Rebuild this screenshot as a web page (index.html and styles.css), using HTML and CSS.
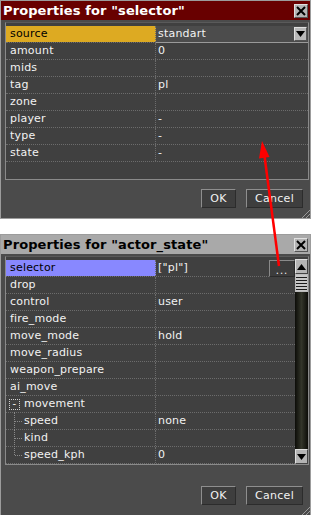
FILE: index.html
```html
<!DOCTYPE html>
<html lang="en">

<head>
    <meta charset="UTF-8">
    <title>Properties</title>
    <link rel="stylesheet" href="styles.css">
</head>

<body>

    <div class="win win-red">
        <div class="titlebar">
            <span class="title">Properties for "selector"</span>
            <span class="close"><svg width="10" height="10" viewBox="0 0 10 10"><path d="M1 1L9 9M9 1L1 9" stroke="#000" stroke-width="2"/></svg></span>
        </div>
        <div class="grid grid-short">
            <div class="rows">
                <div class="row row-gold">
                    <div class="name">source</div>
                    <div class="val combo">standart<span class="drop"><svg width="9" height="6" viewBox="0 0 9 6"><path d="M0 0H9L4.5 6Z" fill="#000"/></svg></span></div>
                </div>
                <div class="row"><div class="name">amount</div><div class="val">0</div></div>
                <div class="row"><div class="name">mids</div><div class="val"></div></div>
                <div class="row"><div class="name">tag</div><div class="val">pl</div></div>
                <div class="row"><div class="name">zone</div><div class="val"></div></div>
                <div class="row"><div class="name">player</div><div class="val">-</div></div>
                <div class="row"><div class="name">type</div><div class="val">-</div></div>
                <div class="row"><div class="name">state</div><div class="val">-</div></div>
            </div>
        </div>
        <div class="buttons">
            <button class="btn btn-ok">OK</button>
            <button class="btn btn-cancel">Cancel</button>
        </div>
        <div class="grip"></div>
    </div>

    <div class="win win-gray">
        <div class="titlebar">
            <span class="title">Properties for "actor_state"</span>
            <span class="close"><svg width="10" height="10" viewBox="0 0 10 10"><path d="M1 1L9 9M9 1L1 9" stroke="#000" stroke-width="2"/></svg></span>
        </div>
        <div class="grid grid-tall">
            <div class="rows">
                <div class="row row-blue">
                    <div class="name">selector</div>
                    <div class="val">["pl"]<span class="more">...</span></div>
                </div>
                <div class="row"><div class="name">drop</div><div class="val"></div></div>
                <div class="row"><div class="name">control</div><div class="val">user</div></div>
                <div class="row"><div class="name">fire_mode</div><div class="val"></div></div>
                <div class="row"><div class="name">move_mode</div><div class="val">hold</div></div>
                <div class="row"><div class="name">move_radius</div><div class="val"></div></div>
                <div class="row"><div class="name">weapon_prepare</div><div class="val"></div></div>
                <div class="row"><div class="name">ai_move</div><div class="val"></div></div>
                <div class="row"><div class="name group"><span class="toggle">-</span>movement</div><div class="val"></div></div>
                <div class="row"><div class="name child">speed</div><div class="val">none</div></div>
                <div class="row"><div class="name child">kind</div><div class="val"></div></div>
                <div class="row"><div class="name child last">speed_kph</div><div class="val">0</div></div>
            </div>
            <div class="scrollbar">
                <div class="sb-btn"><svg width="9" height="6" viewBox="0 0 9 6"><path d="M0 6H9L4.5 0Z" fill="#000"/></svg></div>
                <div class="sb-thumb"></div>
                <div class="sb-track"></div>
                <div class="sb-btn"><svg width="9" height="6" viewBox="0 0 9 6"><path d="M0 0H9L4.5 6Z" fill="#000"/></svg></div>
            </div>
        </div>
        <div class="buttons">
            <button class="btn btn-ok">OK</button>
            <button class="btn btn-cancel">Cancel</button>
        </div>
        <div class="grip"></div>
    </div>

    <!-- red annotation arrow drawn over both windows -->
    <svg class="arrow" width="312" height="515" viewBox="0 0 312 515">
        <line x1="279" y1="266" x2="264.5" y2="156" stroke="#f00" stroke-width="2.5"/>
        <polygon points="262,141 269.5,157 259,158.5" fill="#f00"/>
    </svg>

</body>

</html>
```

FILE: styles.css
```css
body {
    margin: 0;
    background-color: #ffffff;
    font-family: 'DejaVu Sans', Verdana, sans-serif;
    font-size: 11px;
    letter-spacing: 0.2px;
    color: #f2f2f2;
}

/* Windows */
.win {
    position: relative;
    width: 309px;
    border: 1px solid #9c9c9c;
    background-color: #4b4b4b;
    padding-bottom: 10px;
}

.win-gray {
    margin-top: 15px;
}

.titlebar {
    height: 19px;
    display: flex;
    align-items: center;
    justify-content: space-between;
    padding: 0 2px 0 2px;
}

.win-red .titlebar {
    background-color: #680000;
    color: #ffffff;
}

.win-gray .titlebar {
    background-color: #a9a9a9;
    color: #000000;
}

.title {
    font-weight: bold;
    font-size: 13px;
    letter-spacing: 0.1px;
}

.close {
    width: 12px;
    height: 12px;
    display: flex;
    align-items: center;
    justify-content: center;
    background-color: #b4b4b4;
    border: 1px solid #e0e0e0;
    border-right-color: #555;
    border-bottom-color: #555;
}

/* Property grid */
.grid {
    display: flex;
    margin: 2px 1px 0 4px;
    border: 1px solid #8a8a8a;
    border-top-color: #5a5a5a;
    background-color: #404040;
    padding-top: 3px;
}

.grid-short {
    height: 153px;
}

.grid-tall {
    height: 204px;
}

.rows {
    flex: 1;
}

.row {
    display: flex;
    height: 16px;
    line-height: 16px;
    border-bottom: 1px dotted #6c6c6c;
}

.name {
    width: 145px;
    padding-left: 4px;
    border-right: 1px dotted #6c6c6c;
    white-space: nowrap;
}

.val {
    flex: 1;
    position: relative;
    padding-left: 2px;
}

.row-gold .name {
    background-color: #ddaa22;
    color: #000000;
}

.row-blue .name {
    background-color: #8888ff;
    color: #000000;
}

.combo {
    display: flex;
    justify-content: space-between;
    background-color: #4c4c4c;
    border-bottom: 1px solid #9a9a9a;
    margin-bottom: -1px;
}

.drop {
    width: 11px;
    height: 12px;
    margin: 1px 1px 0 0;
    display: flex;
    align-items: center;
    justify-content: center;
    background-color: #b8b8b8;
    border: 1px solid #e0e0e0;
    border-right-color: #555;
    border-bottom-color: #555;
}

.more {
    position: absolute;
    right: 0;
    top: 0;
    width: 24px;
    height: 15px;
    line-height: 19px;
    text-align: center;
    background-color: #3c3c3c;
    border: 1px solid #8a8a8a;
    border-right-color: #2a2a2a;
    border-bottom-color: #2a2a2a;
    font-size: 10px;
    letter-spacing: 1px;
}

/* tree */
.group {
    display: flex;
    align-items: center;
}

.toggle {
    width: 9px;
    height: 9px;
    line-height: 8px;
    text-align: center;
    border: 1px dotted #d0d0d0;
    margin: 0 4px 0 -1px;
    font-size: 10px;
}

.child {
    position: relative;
    padding-left: 18px;
    width: 131px;
}

.child::before {
    content: "";
    position: absolute;
    left: 8px;
    top: -1px;
    height: 18px;
    border-left: 1px dotted #8a8a8a;
}

.child.last::before {
    height: 9px;
}

.child::after {
    content: "";
    position: absolute;
    left: 9px;
    top: 8px;
    width: 7px;
    border-top: 1px dotted #8a8a8a;
}

/* scrollbar */
.scrollbar {
    width: 13px;
    display: flex;
    flex-direction: column;
    margin-top: -1px;
}

.sb-btn {
    height: 13px;
    display: flex;
    align-items: center;
    justify-content: center;
    background-color: #b4b4b4;
    border: 1px solid #e0e0e0;
    border-right-color: #444;
    border-bottom-color: #444;
}

.sb-thumb {
    height: 18px;
    background: repeating-linear-gradient(#c8c8c8 0 2px, #1a1a1a 2px 3px);
    border: 1px solid #bbb;
    box-sizing: border-box;
}

.sb-track {
    flex: 1;
    background: linear-gradient(90deg, #0c0c08, #33352a 50%, #0c0c08);
}

/* buttons */
.buttons {
    display: flex;
    justify-content: flex-end;
    gap: 10px;
    padding-right: 7px;
    margin-top: 9px;
}

.win-gray .buttons {
    margin-top: 21px;
}

.btn {
    height: 19px;
    padding: 0;
    font-family: 'DejaVu Sans', Verdana, sans-serif;
    font-size: 11px;
    letter-spacing: 0.3px;
    color: #f2f2f2;
    background-color: #3e3e3e;
    border: 1px solid #8e8e8e;
    border-right-color: #2c2c2c;
    border-bottom-color: #2c2c2c;
}

.btn-ok {
    width: 35px;
}

.btn-cancel {
    width: 57px;
}

.grip {
    position: absolute;
    right: 0;
    bottom: 0;
    width: 10px;
    height: 10px;
    background: repeating-linear-gradient(135deg, transparent 0 2px, #9a9a9a 2px 3px);
    clip-path: polygon(100% 0, 100% 100%, 0 100%);
}

.arrow {
    position: absolute;
    left: 0;
    top: 0;
    pointer-events: none;
}
```
